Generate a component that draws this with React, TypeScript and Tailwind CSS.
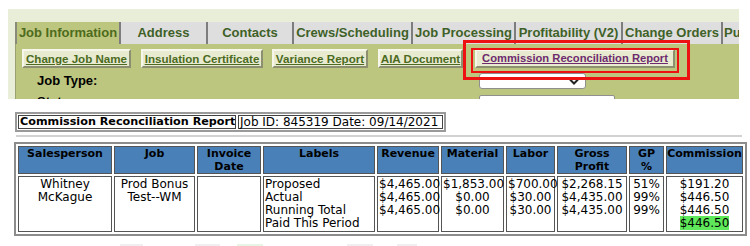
import React from "react";

const ARIAL = "font-['Liberation_Sans',Arial,sans-serif]";
const VERD = "font-['DejaVu_Sans',Verdana,sans-serif]";

const tabs: { label: string; w: string; active?: boolean; left?: boolean }[] = [
  { label: "Job Information", w: "w-[104px]", active: true },
  { label: "Address", w: "w-[87px]" },
  { label: "Contacts", w: "w-[86px]" },
  { label: "Crews/Scheduling", w: "w-[119px]" },
  { label: "Job Processing", w: "w-[103px]" },
  { label: "Profitability (V2)", w: "w-[107px]" },
  { label: "Change Orders", w: "w-[100px]" },
  { label: "Purchasing", w: "w-[18px]", left: true },
];

const buttons: { label: string; w: string; ml: string; visited?: boolean }[] = [
  { label: "Change Job Name", w: "w-[109px]", ml: "ml-[6px]" },
  { label: "Insulation Certificate", w: "w-[122px]", ml: "ml-[10px]" },
  { label: "Variance Report", w: "w-[96px]", ml: "ml-[9px]" },
  { label: "AIA Document", w: "w-[85px]", ml: "ml-[10px]" },
  { label: "Commission Reconciliation Report", w: "w-[200px]", ml: "ml-[12px]", visited: true },
];

const headers: { label: React.ReactNode; w: string }[] = [
  { label: "Salesperson", w: "w-[94px]" },
  { label: "Job", w: "w-[81px]" },
  { label: <>Invoice<br />Date</>, w: "w-[64px]" },
  { label: "Labels", w: "w-[112px]" },
  { label: "Revenue", w: "w-[62px]" },
  { label: "Material", w: "w-[63px]" },
  { label: "Labor", w: "w-[49px]" },
  { label: <>Gross<br />Profit</>, w: "w-[70px]" },
  { label: <>GP<br />%</>, w: "w-[35px]" },
  { label: "Commission", w: "w-[77px]" },
];

export default function App() {
  const td = "border border-[#555] align-top pt-[1px] px-[1px] bg-white";
  return (
    <div className="relative w-[750px] h-[246px] overflow-hidden bg-white">
      {/* Top panel */}
      <div className="ml-[8px] mt-[9px] w-[731px] h-[90px] bg-[#e9eed8] pt-[13px] pl-[7px] overflow-hidden">
        <div className={`flex h-[22px] whitespace-nowrap overflow-hidden ${ARIAL} text-[13px] font-bold`}>
          {tabs.map((t) => (
            <div
              key={t.label}
              className={`${t.w} shrink-0 h-[22px] flex items-center overflow-hidden border-l-2 border-[#7d7d7d] ${
                t.left ? "justify-start pl-[1px]" : "justify-center"
              } ${t.active ? "bg-[#bdc67e] text-[#4d6b1c] border-l border-[#8a8a7a]" : "bg-[#dedede] text-[#3f6128]"}`}
            >
              {t.label}
            </div>
          ))}
        </div>
        <div className="h-[55px] bg-[#bdc67e] border-l border-[#9aa070] overflow-hidden">
          <div className="flex mt-[5px]">
            {buttons.map((b) => (
              <div
                key={b.label}
                className={`${b.w} ${b.ml} shrink-0 h-[19px] flex items-center justify-center bg-[#e8ebcf] border-2 border-t-[#f6f7ea] border-l-[#f6f7ea] border-b-[#8d9070] border-r-[#8d9070] ${ARIAL} ${
                  b.visited ? "text-[11.2px] text-[#6d2a6e]" : "text-[11.6px] text-[#4b6a1f]"
                } font-bold underline whitespace-nowrap`}
              >
                {b.label}
              </div>
            ))}
          </div>
          <div className="flex items-center mt-[5px] h-[16px]">
            <div className={`ml-[21px] w-[442px] ${ARIAL} text-[13px] font-bold text-black`}>Job Type:</div>
            <div className="relative w-[107px] h-[16px] bg-white border border-[#8f8f8f] rounded-[3px]">
              <svg className="absolute right-[6px] top-[4px]" width="10" height="7" viewBox="0 0 10 7">
                <path d="M1 1.5 L5 5.5 L9 1.5" fill="none" stroke="#222" strokeWidth="2" />
              </svg>
            </div>
          </div>
          <div className="flex items-start mt-[6px] h-[16px]">
            <div className={`ml-[21px] w-[442px] ${ARIAL} text-[13px] font-bold text-black leading-[14px]`}>Status:</div>
            <div className="w-[136px] h-[16px] bg-white border border-[#8f8f8f] rounded-[2px]" />
          </div>
        </div>
      </div>

      {/* Report header */}
      <div className={`mt-[13px] ml-[15px] inline-flex border-2 border-[#9a9a9a] p-[1px] gap-[2px] ${VERD} text-[12px] text-black`}>
        <div className="w-[218px] h-[14px] border border-[#444] leading-[12px] pl-[1px] font-bold text-[11.2px] whitespace-nowrap overflow-hidden">
          Commission Reconciliation Report
        </div>
        <div className="w-[205px] h-[14px] border border-[#444] leading-[12px] pl-[1px] whitespace-nowrap">
          Job ID: 845319 Date: 09/14/2021
        </div>
      </div>

      <div className="mt-[3px] ml-[16px] w-[726px] h-[2px] bg-[#d2d2d2]" />

      {/* Main table */}
      <table className={`mt-[5px] ml-[14px] w-[733px] table-fixed border-separate border-spacing-[2px] border-2 border-[#8c8c8c] ${VERD} text-black`}>
        <thead>
          <tr>
            {headers.map((h, i) => (
              <th
                key={i}
                className={`${h.w} h-[28px] border border-[#555] bg-[#4a80b8] align-top p-0 text-center font-bold text-[11px] leading-[13px] whitespace-nowrap`}
              >
                {h.label}
              </th>
            ))}
          </tr>
        </thead>
        <tbody className="text-[12px] leading-[13px]">
          <tr>
            <td className={`${td} h-[56px] text-center`}>Whitney<br />McKague</td>
            <td className={`${td} text-center`}>Prod Bonus<br />Test--WM</td>
            <td className={td}></td>
            <td className={`${td} text-left whitespace-nowrap`}>Proposed<br />Actual<br />Running Total<br />Paid This Period</td>
            <td className={`${td} text-left whitespace-nowrap`}>$4,465.00<br />$4,465.00<br />$4,465.00</td>
            <td className={`${td} text-center whitespace-nowrap`}>$1,853.00<br />$0.00<br />$0.00</td>
            <td className={`${td} text-center whitespace-nowrap`}>$700.00<br />$30.00<br />$30.00</td>
            <td className={`${td} text-center whitespace-nowrap`}>$2,268.15<br />$4,435.00<br />$4,435.00</td>
            <td className={`${td} text-center whitespace-nowrap`}>51%<br />99%<br />99%</td>
            <td className={`${td} text-center whitespace-nowrap`}>
              $191.20<br />$446.50<br />$446.50<br />
              <span className="bg-[#5ee85a]">$446.50</span>
            </td>
          </tr>
        </tbody>
      </table>

      {/* faint bottom shapes */}
      <div className="flex mt-[8px] h-[6px]">
        <div className="ml-[120px] w-[23px] bg-[#efefef]" />
        <div className="ml-[52px] w-[25px] bg-[#efefef]" />
        <div className="ml-[17px] w-[26px] bg-[#e8f4e4]" />
        <div className="ml-[84px] w-[26px] bg-[#efefef]" />
        <div className="ml-[24px] w-[20px] bg-[#efefef]" />
      </div>

      {/* red annotation boxes */}
      <div className="absolute left-[463px] top-[40px] w-[227px] h-[40px] border-[3px] border-[#ee1111]" />
      <div className="absolute left-[471px] top-[48px] w-[208px] h-[25px] border-2 border-[#ee1111]" />
    </div>
  );
}
